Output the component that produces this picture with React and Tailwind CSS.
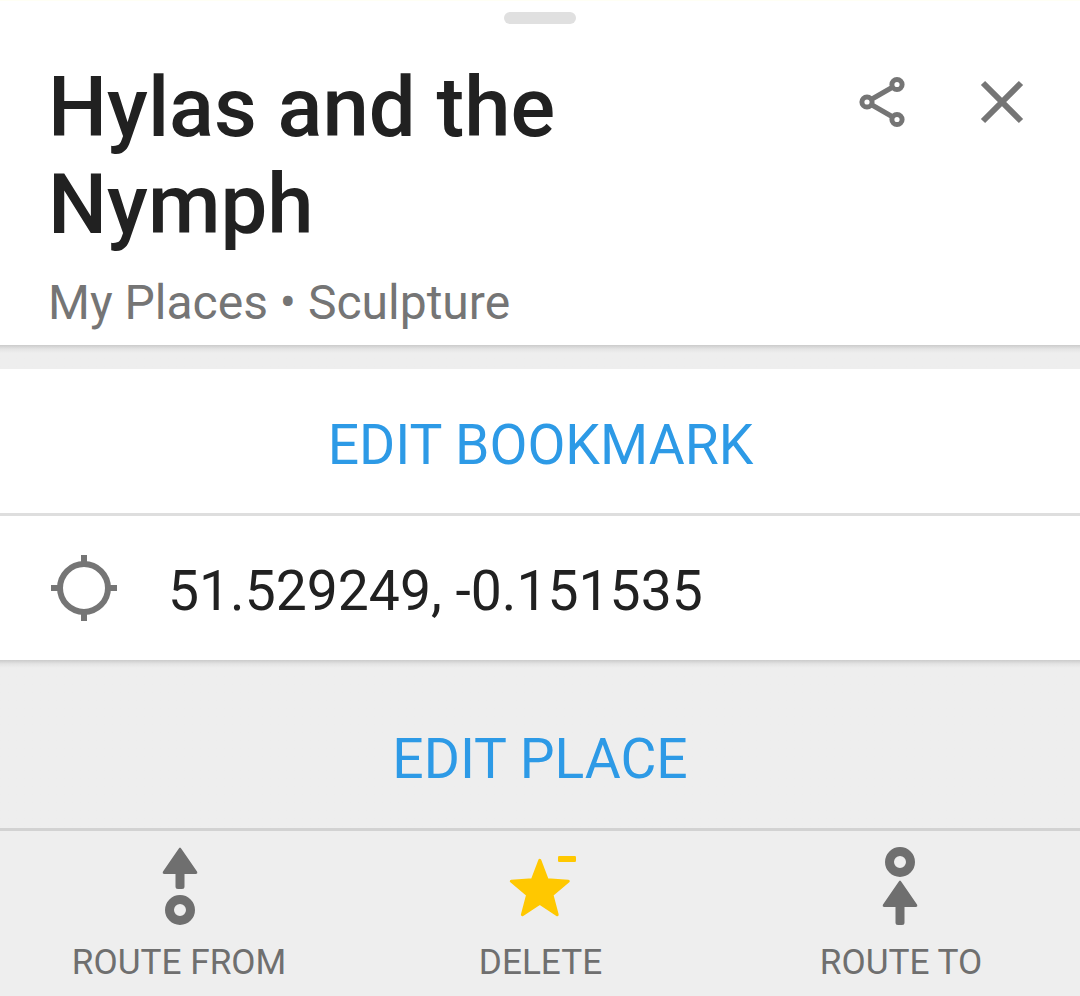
export default function App() {
  return (
    <main className="flex h-[996px] w-[1080px] flex-col overflow-hidden bg-[#eeeeee] font-['Roboto',sans-serif] text-[#212121]">
      <header className="flex h-[345px] shrink-0 flex-col border-t border-[#fffff4] bg-white">
        <div className="flex h-[35px] justify-center pt-[11px]">
          <div className="h-3 w-[72px] rounded-full bg-[#e0e0e0]" />
        </div>
        <div className="flex h-[216px] justify-between pl-[48px] pt-[23px]">
          <h1 className="w-[620px] text-[83.3px] leading-[97px] font-medium whitespace-nowrap">
            Hylas and the<br />Nymph
          </h1>
          <div className="flex pt-px">
            <svg className="h-[84px] w-[120px]" viewBox="822 60 120 84" fill="none" stroke="#757575" strokeWidth="5">
              <path d="M872 99L892 87.5M872 105L892 116.5" />
              <circle cx="867" cy="102" r="5.1" />
              <circle cx="897" cy="84.5" r="5.1" />
              <circle cx="897" cy="119.5" r="5.1" />
            </svg>
            <svg className="h-[84px] w-[138px]" viewBox="942 60 138 84" fill="none" stroke="#757575" strokeWidth="6">
              <path d="M983 83L1021 121M1021 83L983 121" />
            </svg>
          </div>
        </div>
        <p className="pl-[48px] pt-[23px] text-[48px] leading-[56px] text-[#757575]">My Places • Sculpture</p>
      </header>
      <div className="h-6 shrink-0 bg-linear-to-b from-[#cbcbcb] via-[#e4e4e4] via-[4px] to-[#eeeeee] to-[8px]" />
      <button className="h-[144px] shrink-0 bg-white pt-[8px] pl-px text-[55.2px] text-[#2d9ae6]">EDIT BOOKMARK</button>
      <section className="flex h-[147px] shrink-0 items-center border-t-[3px] border-[#dedede] bg-white pl-[48px]">
        <svg className="h-[72px] w-[72px]" viewBox="0 0 72 72" fill="none" stroke="#757575" strokeWidth="6">
          <circle cx="36" cy="36" r="24" />
          <path d="M36 3V12M36 60V69M3 36H12M60 36H69" />
        </svg>
        <span className="pl-[48px] pt-[7px] text-[55.25px]">51.529249, -0.151535</span>
      </section>
      <button className="h-[168px] shrink-0 bg-linear-to-b from-[#cbcbcb] via-[#e4e4e4] via-[4px] to-[#eeeeee] to-[8px] pt-[30px] text-[55.2px] text-[#2d9ae6]">EDIT PLACE</button>
      <nav className="grid h-[168px] shrink-0 grid-cols-3 border-t-[3px] border-[#d2d2d2] text-[35.2px] text-[#6f6f6f]">
        <button className="flex flex-col items-center">
          <svg className="h-[108px] w-[100px]" viewBox="130 831 100 108" fill="#6f6f6f">
            <path d="M180 847.5Q180.7 847.5 181.5 849L197 871.5Q198 874 195.5 874H184.5V886.5Q184.5 889 182 889H178Q175.5 889 175.5 886.5V874H164.5Q162 874 163 871.5L178.5 849Q179.3 847.5 180 847.5Z" />
            <circle cx="180" cy="910" r="10.5" fill="none" stroke="#6f6f6f" strokeWidth="9" />
          </svg>
          <span className="pr-[2px] leading-[46px]">ROUTE FROM</span>
        </button>
        <button className="flex flex-col items-center">
          <svg className="h-[108px] w-[100px]" viewBox="490 831 100 108" fill="#ffc800" stroke="#ffc800" strokeLinejoin="round">
            <path strokeWidth="3" d="M539.8 860.3L547.2 879.7L568.3 881.2L552 894.8L557.2 914.7L539.8 903.3L522.4 914.7L527.6 894.8L511.3 881.2L532.4 879.7Z" />
            <rect x="558" y="856" width="18" height="6" rx="1.3" stroke="none" />
          </svg>
          <span className="pl-px leading-[46px]">DELETE</span>
        </button>
        <button className="flex flex-col items-center">
          <svg className="h-[108px] w-[100px]" viewBox="850 831 100 108" fill="#6f6f6f">
            <circle cx="900" cy="862" r="10.5" fill="none" stroke="#6f6f6f" strokeWidth="9" />
            <path d="M900 880.5Q900.7 880.5 901.5 882L917 904.5Q918 907 915.5 907H904.5V922.5Q904.5 925 902 925H898Q895.5 925 895.5 922.5V907H884.5Q882 907 883 904.5L898.5 882Q899.3 880.5 900 880.5Z" />
          </svg>
          <span className="pl-[2px] leading-[46px]">ROUTE TO</span>
        </button>
      </nav>
    </main>
  );
}
